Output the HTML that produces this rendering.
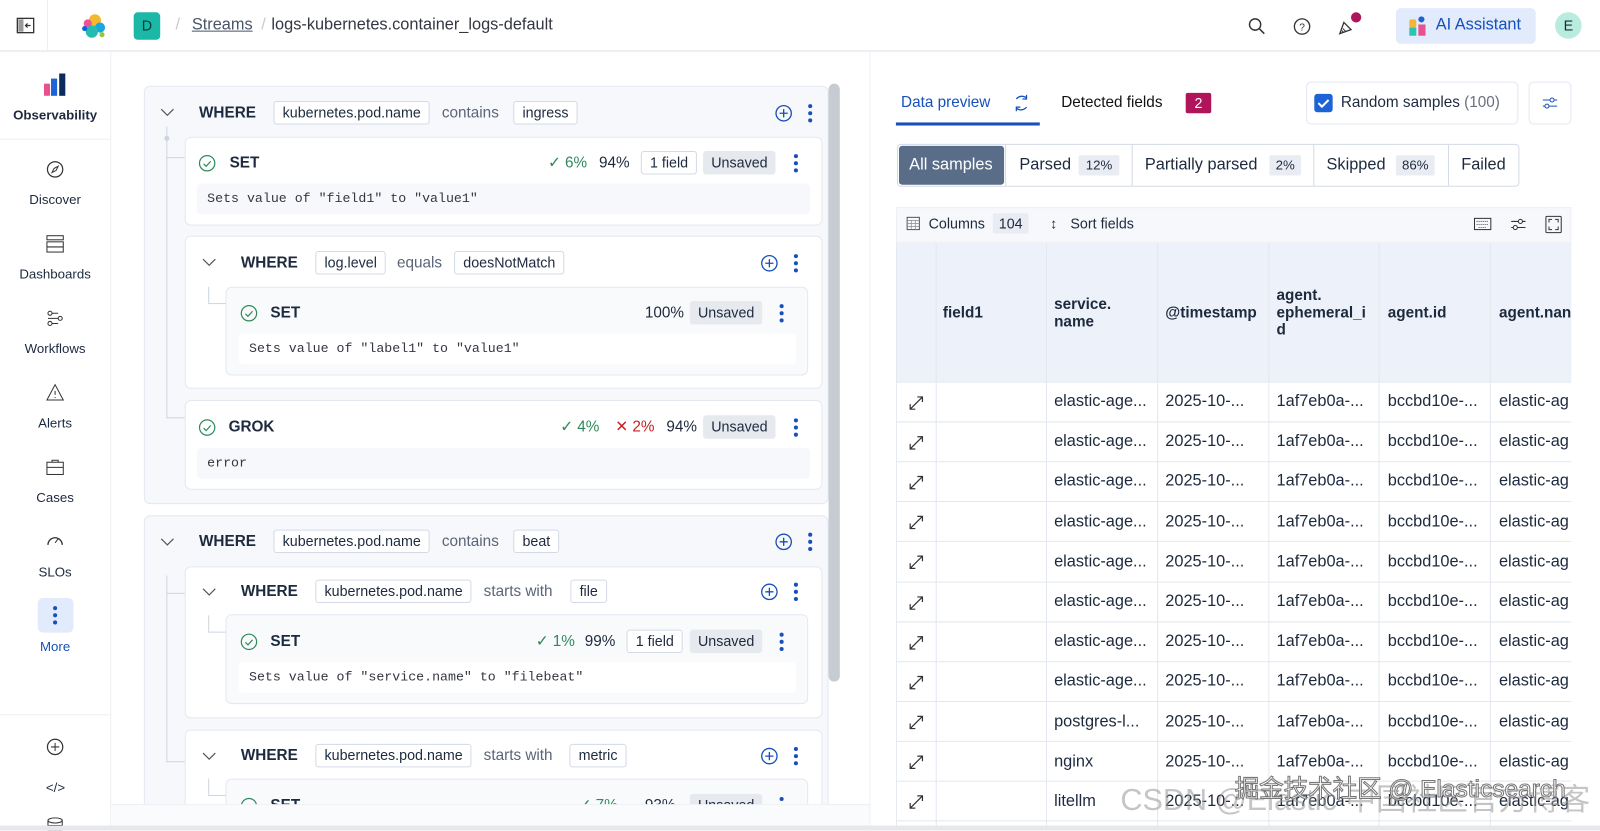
<!DOCTYPE html>
<html><head><meta charset="utf-8"><style>
*{box-sizing:border-box;margin:0;padding:0}
html,body{width:1600px;height:831px;overflow:hidden;background:#fff}
body{font-family:"Liberation Sans",sans-serif;color:#1d2a3e;position:relative}
#clip{position:absolute;left:0;top:0;width:1600px;height:831px;overflow:hidden}
#root{position:absolute;left:0;top:0;width:1568px;height:814px;transform:scale(1.020408);transform-origin:0 0;overflow:hidden}
.a{position:absolute}
.t{position:absolute;white-space:nowrap;line-height:1}
.b{font-weight:bold}
.tag{position:absolute;height:23px;border:1px solid #d3dae6;background:#fff;border-radius:3px;font-size:14px;line-height:21px;padding:0 8px;white-space:nowrap}
.uns{position:absolute;height:23px;background:#e6e9ee;border-radius:3px;font-size:14px;line-height:23px;padding:0 8px;white-space:nowrap}
.card{position:absolute;background:#fff;border:1px solid #e3e8f2;border-radius:6px}
.desc{position:absolute;background:#f7f8fb;border-radius:4px;font-family:"Liberation Mono",monospace;font-size:13px;color:#343741;line-height:30px;padding-left:10px;white-space:pre}
.dots{position:absolute;width:4px;height:18px}
.dots i{display:block;width:4px;height:4px;border-radius:50%;background:#1750ba;margin-bottom:3px}
.nav{position:absolute;left:0;width:108px;text-align:center;font-size:13px;color:#1d2a3e}
.g{color:#2f8a5a}
.r{color:#c61e25}
.cell{position:absolute;font-size:15px;white-space:nowrap;line-height:1}
</style></head><body><div id="clip"><div id="root">
<!-- top header -->
<div class="a" style="left:0;top:0;width:1600px;height:51px;border-bottom:2px solid #eceff3;background:#fff"></div>
<div class="a" style="left:46px;top:0;width:1px;height:51px;background:#eceff3"></div>
<svg class="a" style="left:16px;top:16px" width="18" height="18" viewBox="0 0 18 18"><rect x="1" y="2" width="16" height="14" fill="none" stroke="#333" stroke-width="1.3"/><rect x="2" y="3" width="5" height="12" fill="#999"/><path d="M14 9H9M11 7l-2 2 2 2" stroke="#333" fill="none" stroke-width="1.2"/></svg>
<svg class="a" style="left:78px;top:12px" width="28" height="28" viewBox="0 0 28 28"><circle cx="15" cy="8" r="6" fill="#f2b92f"/><circle cx="8" cy="11" r="4" fill="#ef5098"/><circle cx="20" cy="15" r="5" fill="#17a8e0"/><circle cx="12" cy="19" r="6" fill="#24bbb1"/><circle cx="22" cy="22" r="2.5" fill="#93c83e"/><circle cx="5" cy="16" r="2.5" fill="#0b64dd"/></svg>
<div class="a" style="left:131px;top:12px;width:26px;height:27px;background:#1bb8a8;border-radius:4px;color:#083a36;font-size:14px;text-align:center;line-height:27px">D</div>
<div class="t" style="left:172px;top:17px;font-size:16px;color:#c5cbd4">/</div>
<div class="t" style="left:188px;top:17px;font-size:16px;color:#4a5568;text-decoration:underline">Streams</div>
<div class="t" style="left:256px;top:17px;font-size:16px;color:#c5cbd4">/</div>
<div class="t" style="left:266px;top:17px;font-size:16px;color:#343741">logs-kubernetes.container_logs-default</div>
<svg class="a" style="left:1223px;top:17px" width="18" height="18" viewBox="0 0 18 18"><circle cx="7" cy="7" r="5.5" fill="none" stroke="#333" stroke-width="1.4"/><path d="M11 11l5 5" stroke="#333" stroke-width="1.5"/></svg>
<svg class="a" style="left:1267px;top:17px" width="18" height="18" viewBox="0 0 18 18"><circle cx="9" cy="9" r="7.5" fill="none" stroke="#333" stroke-width="1.3"/><text x="9" y="13" font-size="10" text-anchor="middle" font-family="Liberation Sans" fill="#333">?</text></svg>
<svg class="a" style="left:1310px;top:16px" width="20" height="20" viewBox="0 0 20 20"><path d="M3 17l4-11 7 7z" fill="none" stroke="#333" stroke-width="1.3"/><path d="M6 12l3 3M5 14l2 2" stroke="#333"/></svg>
<div class="a" style="left:1324px;top:12px;width:10px;height:10px;border-radius:50%;background:#b0145a"></div>
<div class="a" style="left:1368px;top:8px;width:137px;height:35px;background:#e1ebfc;border-radius:5px"></div>
<svg class="a" style="left:1381px;top:16px" width="18" height="20" viewBox="0 0 18 20"><rect x="0" y="3" width="7" height="8" fill="#f3b63c" rx="2"/><rect x="0" y="11" width="7" height="8" fill="#2ac4b0"/><circle cx="12" cy="3" r="3" fill="#1d62d6"/><rect x="9" y="8" width="7" height="11" fill="#e8508f"/></svg>
<div class="t" style="left:1407px;top:17px;font-size:16px;color:#1750ba">AI Assistant</div>
<div class="a" style="left:1524px;top:12px;width:26px;height:26px;border-radius:50%;background:#b8ecde;font-size:14px;text-align:center;line-height:26px">E</div>

<!-- left nav -->
<div class="a" style="left:108px;top:51px;width:1px;height:780px;background:#eceff3"></div>
<div class="a" style="left:0;top:136px;width:108px;height:1px;background:#eceff3"></div>
<div class="a" style="left:0;top:700px;width:108px;height:1px;background:#eceff3"></div>
<svg class="a" style="left:43px;top:72px" width="22" height="22" viewBox="0 0 22 22"><rect x="0" y="10" width="6" height="12" fill="#e8508f" rx="1"/><rect x="7" y="5" width="6" height="17" fill="#1d62d6"/><rect x="15" y="0" width="6" height="22" fill="#0b2b5a"/></svg>
<div class="nav" style="top:105px;font-weight:bold">Observability</div>
<svg class="a" style="left:45px;top:157px" width="18" height="18" viewBox="0 0 18 18"><circle cx="9" cy="9" r="7.5" fill="none" stroke="#333" stroke-width="1.2"/><path d="M12 6l-2 4-4 2 2-4z" fill="none" stroke="#333"/></svg>
<div class="nav" style="top:188px">Discover</div>
<svg class="a" style="left:45px;top:230px" width="18" height="18" viewBox="0 0 18 18"><rect x="1" y="1" width="16" height="4" fill="none" stroke="#333"/><rect x="1" y="7" width="16" height="10" fill="none" stroke="#333"/><path d="M1 12h16" stroke="#333"/></svg>
<div class="nav" style="top:261px">Dashboards</div>
<svg class="a" style="left:45px;top:303px" width="18" height="18" viewBox="0 0 18 18"><circle cx="4" cy="4" r="2" fill="none" stroke="#333"/><circle cx="14" cy="9" r="2" fill="none" stroke="#333"/><circle cx="4" cy="14" r="2" fill="none" stroke="#333"/><path d="M6 4h6M6 14h6M2 9h10" stroke="#333"/></svg>
<div class="nav" style="top:334px">Workflows</div>
<svg class="a" style="left:45px;top:376px" width="18" height="18" viewBox="0 0 18 18"><path d="M9 1L17 16H1z" fill="none" stroke="#333"/><path d="M9 7v4M9 13v1" stroke="#333"/></svg>
<div class="nav" style="top:407px">Alerts</div>
<svg class="a" style="left:45px;top:449px" width="18" height="18" viewBox="0 0 18 18"><rect x="1" y="4" width="16" height="12" fill="none" stroke="#333"/><path d="M6 4V2h6v2M1 9h16" stroke="#333" fill="none"/></svg>
<div class="nav" style="top:480px">Cases</div>
<svg class="a" style="left:45px;top:522px" width="18" height="14" viewBox="0 0 18 14"><path d="M2 12A7 7 0 1 1 16 12" fill="none" stroke="#333" stroke-width="1.3"/><path d="M9 10l3-4" stroke="#333"/></svg>
<div class="nav" style="top:553px">SLOs</div>
<div class="a" style="left:37px;top:586px;width:35px;height:34px;background:#e1ebfc;border-radius:5px"></div>
<div class="dots" style="left:52px;top:594px"><i></i><i></i><i></i></div>
<div class="nav" style="top:626px;color:#1750ba">More</div>
<svg class="a" style="left:45px;top:723px" width="18" height="18" viewBox="0 0 18 18"><circle cx="9" cy="9" r="7.5" fill="none" stroke="#333" stroke-width="1.2"/><path d="M9 5v8M5 9h8" stroke="#333"/></svg>
<div class="t" style="left:45px;top:765px;font-size:13px">&lt;/&gt;</div>
<svg class="a" style="left:46px;top:801px" width="16" height="14" viewBox="0 0 16 14"><ellipse cx="8" cy="3" rx="7" ry="2.5" fill="none" stroke="#333"/><path d="M1 3v10h14V3M1 8h14" fill="none" stroke="#333"/></svg>

<!-- main left panel -->
<div class="a" style="left:109px;top:788px;width:743px;height:30px;background:#fafbfc;border-top:1px solid #eceff3"></div>
<div class="a" style="left:109px;top:51px;width:743px;height:737px;overflow:hidden">
 <div style="position:absolute;left:-109px;top:-51px;width:900px;height:900px">
 <!-- group1 -->
 <div class="card" style="left:141px;top:84px;width:671px;height:410px;background:#f7f8fc"></div>
 <svg class="a" style="left:156px;top:104px" width="16" height="12"><path d="M2 3l6 6 6-6" fill="none" stroke="#555" stroke-width="1.2"/></svg>
 <div class="t b" style="left:195px;top:103px;font-size:15px">WHERE</div>
 <div class="tag" style="left:268px;top:99px">kubernetes.pod.name</div>
 <div class="t" style="left:433px;top:103px;font-size:15px;color:#5a6578">contains</div>
 <div class="tag" style="left:503px;top:99px">ingress</div>
 <svg class="a" style="left:759px;top:102px" width="18" height="18"><circle cx="9" cy="9" r="7.5" fill="none" stroke="#1750ba" stroke-width="1.3"/><path d="M9 5v8M5 9h8" stroke="#1750ba" stroke-width="1.3"/></svg>
 <div class="dots" style="left:792px;top:102px"><i></i><i></i><i></i></div>
 <div class="a" style="left:163px;top:124px;width:1px;height:286px;background:#cfd5df"></div>
 <div class="a" style="left:161px;top:133px;width:5px;height:5px;border-radius:50%;background:#cfd5df"></div>
 <div class="a" style="left:163px;top:154px;width:18px;height:1px;background:#cfd5df"></div>
 <div class="a" style="left:163px;top:409px;width:18px;height:1px;background:#cfd5df"></div>

 <div class="card" style="left:181px;top:134px;width:625px;height:87px"></div>
 <svg class="a" style="left:194px;top:151px" width="18" height="18"><circle cx="9" cy="9" r="7.5" fill="none" stroke="#2f8a5a" stroke-width="1.2"/><path d="M5.5 9.5l2.5 2.5 4.5-5" fill="none" stroke="#2f8a5a" stroke-width="1.2"/></svg>
 <div class="t b" style="left:225px;top:152px;font-size:15px">SET</div>
 <div class="t g" style="left:537px;top:152px;font-size:15px">✓ 6%</div>
 <div class="t" style="left:587px;top:152px;font-size:15px">94%</div>
 <div class="tag" style="left:628px;top:148px">1 field</div>
 <div class="uns" style="left:689px;top:148px">Unsaved</div>
 <div class="dots" style="left:778px;top:151px"><i></i><i></i><i></i></div>
 <div class="desc" style="left:193px;top:180px;width:601px">Sets value of "field1" to "value1"</div>

 <div class="card" style="left:181px;top:231px;width:625px;height:150px"></div>
 <svg class="a" style="left:197px;top:251px" width="16" height="12"><path d="M2 3l6 6 6-6" fill="none" stroke="#555" stroke-width="1.2"/></svg>
 <div class="t b" style="left:236px;top:250px;font-size:15px">WHERE</div>
 <div class="tag" style="left:309px;top:246px">log.level</div>
 <div class="t" style="left:389px;top:250px;font-size:15px;color:#5a6578">equals</div>
 <div class="tag" style="left:445px;top:246px">doesNotMatch</div>
 <svg class="a" style="left:745px;top:249px" width="18" height="18"><circle cx="9" cy="9" r="7.5" fill="none" stroke="#1750ba" stroke-width="1.3"/><path d="M9 5v8M5 9h8" stroke="#1750ba" stroke-width="1.3"/></svg>
 <div class="dots" style="left:778px;top:249px"><i></i><i></i><i></i></div>
 <div class="a" style="left:204px;top:281px;width:1px;height:16px;background:#cfd5df"></div>
 <div class="a" style="left:204px;top:297px;width:17px;height:1px;background:#cfd5df"></div>
 <div class="card" style="left:221px;top:281px;width:571px;height:87px;background:#f9fafc"></div>
 <svg class="a" style="left:235px;top:298px" width="18" height="18"><circle cx="9" cy="9" r="7.5" fill="none" stroke="#2f8a5a" stroke-width="1.2"/><path d="M5.5 9.5l2.5 2.5 4.5-5" fill="none" stroke="#2f8a5a" stroke-width="1.2"/></svg>
 <div class="t b" style="left:265px;top:299px;font-size:15px">SET</div>
 <div class="t" style="left:632px;top:299px;font-size:15px">100%</div>
 <div class="uns" style="left:676px;top:295px">Unsaved</div>
 <div class="dots" style="left:764px;top:298px"><i></i><i></i><i></i></div>
 <div class="desc" style="left:234px;top:327px;width:546px;background:#fff">Sets value of "label1" to "value1"</div>

 <div class="card" style="left:181px;top:392px;width:625px;height:88px"></div>
 <svg class="a" style="left:194px;top:410px" width="18" height="18"><circle cx="9" cy="9" r="7.5" fill="none" stroke="#2f8a5a" stroke-width="1.2"/><path d="M5.5 9.5l2.5 2.5 4.5-5" fill="none" stroke="#2f8a5a" stroke-width="1.2"/></svg>
 <div class="t b" style="left:224px;top:411px;font-size:15px">GROK</div>
 <div class="t g" style="left:549px;top:411px;font-size:15px">✓ 4%</div>
 <div class="t r" style="left:603px;top:411px;font-size:15px">✕ 2%</div>
 <div class="t" style="left:653px;top:411px;font-size:15px">94%</div>
 <div class="uns" style="left:689px;top:407px">Unsaved</div>
 <div class="dots" style="left:778px;top:410px"><i></i><i></i><i></i></div>
 <div class="desc" style="left:193px;top:439px;width:601px">error</div>

 <!-- group2 -->
 <div class="card" style="left:141px;top:505px;width:671px;height:400px;background:#f7f8fc"></div>
 <svg class="a" style="left:156px;top:525px" width="16" height="12"><path d="M2 3l6 6 6-6" fill="none" stroke="#555" stroke-width="1.2"/></svg>
 <div class="t b" style="left:195px;top:523px;font-size:15px">WHERE</div>
 <div class="tag" style="left:268px;top:519px">kubernetes.pod.name</div>
 <div class="t" style="left:433px;top:523px;font-size:15px;color:#5a6578">contains</div>
 <div class="tag" style="left:503px;top:519px">beat</div>
 <svg class="a" style="left:759px;top:522px" width="18" height="18"><circle cx="9" cy="9" r="7.5" fill="none" stroke="#1750ba" stroke-width="1.3"/><path d="M9 5v8M5 9h8" stroke="#1750ba" stroke-width="1.3"/></svg>
 <div class="dots" style="left:792px;top:522px"><i></i><i></i><i></i></div>
 <div class="a" style="left:163px;top:564px;width:1px;height:183px;background:#cfd5df"></div>
 <div class="a" style="left:163px;top:581px;width:18px;height:1px;background:#cfd5df"></div>
 <div class="a" style="left:163px;top:746px;width:18px;height:1px;background:#cfd5df"></div>

 <div class="card" style="left:181px;top:555px;width:625px;height:149px"></div>
 <svg class="a" style="left:197px;top:574px" width="16" height="12"><path d="M2 3l6 6 6-6" fill="none" stroke="#555" stroke-width="1.2"/></svg>
 <div class="t b" style="left:236px;top:572px;font-size:15px">WHERE</div>
 <div class="tag" style="left:309px;top:568px">kubernetes.pod.name</div>
 <div class="t" style="left:474px;top:572px;font-size:15px;color:#5a6578">starts with</div>
 <div class="tag" style="left:559px;top:568px">file</div>
 <svg class="a" style="left:745px;top:571px" width="18" height="18"><circle cx="9" cy="9" r="7.5" fill="none" stroke="#1750ba" stroke-width="1.3"/><path d="M9 5v8M5 9h8" stroke="#1750ba" stroke-width="1.3"/></svg>
 <div class="dots" style="left:778px;top:571px"><i></i><i></i><i></i></div>
 <div class="a" style="left:204px;top:603px;width:1px;height:16px;background:#cfd5df"></div>
 <div class="a" style="left:204px;top:619px;width:17px;height:1px;background:#cfd5df"></div>
 <div class="card" style="left:221px;top:602px;width:571px;height:88px;background:#f9fafc"></div>
 <svg class="a" style="left:235px;top:620px" width="18" height="18"><circle cx="9" cy="9" r="7.5" fill="none" stroke="#2f8a5a" stroke-width="1.2"/><path d="M5.5 9.5l2.5 2.5 4.5-5" fill="none" stroke="#2f8a5a" stroke-width="1.2"/></svg>
 <div class="t b" style="left:265px;top:621px;font-size:15px">SET</div>
 <div class="t g" style="left:525px;top:621px;font-size:15px">✓ 1%</div>
 <div class="t" style="left:573px;top:621px;font-size:15px">99%</div>
 <div class="tag" style="left:614px;top:617px">1 field</div>
 <div class="uns" style="left:676px;top:617px">Unsaved</div>
 <div class="dots" style="left:764px;top:620px"><i></i><i></i><i></i></div>
 <div class="desc" style="left:234px;top:649px;width:546px;background:#fff">Sets value of "service.name" to "filebeat"</div>

 <div class="card" style="left:181px;top:715px;width:625px;height:149px"></div>
 <svg class="a" style="left:197px;top:735px" width="16" height="12"><path d="M2 3l6 6 6-6" fill="none" stroke="#555" stroke-width="1.2"/></svg>
 <div class="t b" style="left:236px;top:733px;font-size:15px">WHERE</div>
 <div class="tag" style="left:309px;top:729px">kubernetes.pod.name</div>
 <div class="t" style="left:474px;top:733px;font-size:15px;color:#5a6578">starts with</div>
 <div class="tag" style="left:558px;top:729px">metric</div>
 <svg class="a" style="left:745px;top:732px" width="18" height="18"><circle cx="9" cy="9" r="7.5" fill="none" stroke="#1750ba" stroke-width="1.3"/><path d="M9 5v8M5 9h8" stroke="#1750ba" stroke-width="1.3"/></svg>
 <div class="dots" style="left:778px;top:732px"><i></i><i></i><i></i></div>
 <div class="a" style="left:204px;top:763px;width:1px;height:16px;background:#cfd5df"></div>
 <div class="a" style="left:204px;top:779px;width:17px;height:1px;background:#cfd5df"></div>
 <div class="card" style="left:221px;top:763px;width:571px;height:88px;background:#f9fafc"></div>
 <svg class="a" style="left:235px;top:781px" width="18" height="18"><circle cx="9" cy="9" r="7.5" fill="none" stroke="#2f8a5a" stroke-width="1.2"/></svg>
 <div class="t b" style="left:265px;top:782px;font-size:15px">SET</div>
 <div class="t g" style="left:567px;top:782px;font-size:15px">✓ 7%</div>
 <div class="t" style="left:632px;top:782px;font-size:15px">93%</div>
 <div class="uns" style="left:676px;top:778px">Unsaved</div>
 <div class="dots" style="left:764px;top:781px"><i></i><i></i><i></i></div>
 </div>
</div>
<div class="a" style="left:812px;top:82px;width:11px;height:586px;background:#c7cbd2;border-radius:6px"></div>

<!-- right panel -->
<div class="a" style="left:852px;top:51px;width:1px;height:780px;background:#eceff3"></div>
<div class="t" style="left:883px;top:93px;font-size:15px;color:#1750ba">Data preview</div>
<svg class="a" style="left:992px;top:92px" width="18" height="18"><path d="M4 5A7 7 0 0 1 14 4M14 13A7 7 0 0 1 4 14" fill="none" stroke="#1750ba" stroke-width="1.3"/><path d="M14 1v4h-4M4 17v-4h4" fill="none" stroke="#1750ba" stroke-width="1.2"/></svg>
<div class="a" style="left:878px;top:120px;width:141px;height:3px;background:#1750ba"></div>
<div class="t" style="left:1040px;top:93px;font-size:15px;color:#111">Detected fields</div>
<div class="a" style="left:1162px;top:91px;width:25px;height:20px;background:#b0145a;color:#fff;font-size:14px;text-align:center;line-height:20px;border-radius:2px">2</div>
<div class="a" style="left:1280px;top:80px;width:208px;height:42px;border:1px solid #e3e8f2;border-radius:5px"></div>
<div class="a" style="left:1288px;top:92px;width:18px;height:18px;background:#1d62d6;border-radius:3px"></div>
<svg class="a" style="left:1288px;top:92px" width="18" height="18"><path d="M4 9l3.5 3.5L14 6" fill="none" stroke="#fff" stroke-width="2"/></svg>
<div class="t" style="left:1314px;top:93px;font-size:15px">Random samples <span style="color:#69707d">(100)</span></div>
<div class="a" style="left:1498px;top:80px;width:42px;height:42px;border:1px solid #e3e8f2;border-radius:5px"></div>
<svg class="a" style="left:1511px;top:93px" width="16" height="16"><path d="M1 5h14M1 11h14" stroke="#1750ba"/><circle cx="10" cy="5" r="2" fill="#fff" stroke="#1750ba"/><circle cx="5" cy="11" r="2" fill="#fff" stroke="#1750ba"/></svg>

<div class="a" style="left:879px;top:141px;width:610px;height:42px;border:1px solid #d3dae6;border-radius:4px"></div>
<div class="a" style="left:881px;top:143px;width:103px;height:38px;background:#5a6d88;border-radius:3px"></div>
<div class="t" style="left:891px;top:154px;font-size:16px;color:#fff">All samples</div>
<div class="a" style="left:985px;top:142px;width:1px;height:40px;background:#d3dae6"></div>
<div class="t" style="left:999px;top:154px;font-size:16px">Parsed</div>
<div class="a" style="left:1057px;top:152px;width:40px;height:20px;background:#e9edf3;font-size:13px;text-align:center;line-height:20px;border-radius:2px">12%</div>
<div class="a" style="left:1109px;top:142px;width:1px;height:40px;background:#d3dae6"></div>
<div class="t" style="left:1122px;top:154px;font-size:16px">Partially parsed</div>
<div class="a" style="left:1244px;top:152px;width:31px;height:20px;background:#e9edf3;font-size:13px;text-align:center;line-height:20px;border-radius:2px">2%</div>
<div class="a" style="left:1287px;top:142px;width:1px;height:40px;background:#d3dae6"></div>
<div class="t" style="left:1300px;top:154px;font-size:16px">Skipped</div>
<div class="a" style="left:1368px;top:152px;width:38px;height:20px;background:#e9edf3;font-size:13px;text-align:center;line-height:20px;border-radius:2px">86%</div>
<div class="a" style="left:1419px;top:142px;width:1px;height:40px;background:#d3dae6"></div>
<div class="t" style="left:1432px;top:154px;font-size:16px">Failed</div>

<!-- table -->
<div class="a" style="left:878px;top:203px;width:662px;height:35px;background:#f7f8fb;border:1px solid #eceff3"></div>
<svg class="a" style="left:888px;top:212px" width="14" height="14"><rect x="1" y="1" width="12" height="12" fill="none" stroke="#555"/><path d="M1 4h12M1 7h12M1 10h12M5 4v9M9 4v9" stroke="#888" stroke-width=".7"/></svg>
<div class="t" style="left:910px;top:212px;font-size:14px">Columns</div>
<div class="a" style="left:973px;top:209px;width:35px;height:20px;background:#e9edf3;font-size:14px;text-align:center;line-height:20px;border-radius:2px">104</div>
<div class="t" style="left:1029px;top:212px;font-size:14px">↕</div>
<div class="t" style="left:1049px;top:212px;font-size:14px">Sort fields</div>
<svg class="a" style="left:1444px;top:213px" width="18" height="13"><rect x="1" y="1" width="16" height="11" fill="none" stroke="#333"/><path d="M3 4h12M3 7h12M5 10h8" stroke="#555" stroke-dasharray="1 1"/></svg>
<svg class="a" style="left:1480px;top:212px" width="16" height="16"><path d="M1 5h14M1 11h14" stroke="#333"/><circle cx="10" cy="5" r="2" fill="#fff" stroke="#333"/><circle cx="5" cy="11" r="2" fill="#fff" stroke="#333"/></svg>
<svg class="a" style="left:1514px;top:211px" width="17" height="18"><rect x="1" y="1" width="15" height="16" fill="none" stroke="#333" rx="1"/><path d="M4 7V4h3M13 7V4h-3M4 11v3h3M13 11v3h-3" stroke="#333" fill="none"/></svg>
<div class="a" style="left:878px;top:238px;width:662px;height:136px;background:#edf2fa"></div>
<div class="cell b" style="left:924px;top:299px">field1</div>
<div class="cell b" style="left:1033px;top:290px;line-height:17px">service.<br>name</div>
<div class="cell b" style="left:1142px;top:299px">@timestamp</div>
<div class="cell b" style="left:1251px;top:281px;line-height:17px">agent.<br>ephemeral_i<br>d</div>
<div class="cell b" style="left:1360px;top:299px">agent.id</div>
<div class="cell b" style="left:1469px;top:299px">agent.nan</div>
<div class="a" style="left:878px;top:238px;width:662px;height:593px;overflow:hidden">
<svg width="662" height="593" style="position:absolute;left:0;top:0">
<g stroke="#e3e8ef" stroke-width="1">
<path d="M0.5 0V593M39.5 0V593M147.5 0V593M256.5 0V593M365.5 0V593M473.5 0V593M582.5 0V593"/>
<path d="M0 136.5H662M0 175.5H662M0 214.5H662M0 253.5H662M0 292.5H662M0 332.5H662M0 371.5H662M0 410.5H662M0 449.5H662M0 488.5H662M0 527.5H662M0 566.5H662"/>
</g>
<g stroke="#333" stroke-width="1.2" fill="none">
<path d="M14 163l12-12M21 151h5v5M14 158v5h5"/><path d="M14 202l12-12M21 190h5v5M14 197v5h5"/><path d="M14 241l12-12M21 229h5v5M14 236v5h5"/><path d="M14 280l12-12M21 268h5v5M14 275v5h5"/><path d="M14 319l12-12M21 307h5v5M14 314v5h5"/><path d="M14 359l12-12M21 347h5v5M14 354v5h5"/><path d="M14 398l12-12M21 386h5v5M14 393v5h5"/><path d="M14 437l12-12M21 425h5v5M14 432v5h5"/><path d="M14 476l12-12M21 464h5v5M14 471v5h5"/><path d="M14 515l12-12M21 503h5v5M14 510v5h5"/><path d="M14 554l12-12M21 542h5v5M14 549v5h5"/>
</g>
</svg>
</div>
<div class="a" style="left:1033px;top:374px;font-size:16px;line-height:39.2px;white-space:nowrap">
elastic-age...<br>elastic-age...<br>elastic-age...<br>elastic-age...<br>elastic-age...<br>elastic-age...<br>elastic-age...<br>elastic-age...<br>postgres-l...<br>nginx<br>litellm</div>
<div class="a" style="left:1142px;top:374px;font-size:16px;line-height:39.2px;white-space:nowrap">2025-10-...<br>2025-10-...<br>2025-10-...<br>2025-10-...<br>2025-10-...<br>2025-10-...<br>2025-10-...<br>2025-10-...<br>2025-10-...<br>2025-10-...<br>2025-10-...</div>
<div class="a" style="left:1251px;top:374px;font-size:16px;line-height:39.2px;white-space:nowrap">1af7eb0a-...<br>1af7eb0a-...<br>1af7eb0a-...<br>1af7eb0a-...<br>1af7eb0a-...<br>1af7eb0a-...<br>1af7eb0a-...<br>1af7eb0a-...<br>1af7eb0a-...<br>1af7eb0a-...<br>1af7eb0a-...</div>
<div class="a" style="left:1360px;top:374px;font-size:16px;line-height:39.2px;white-space:nowrap">bccbd10e-...<br>bccbd10e-...<br>bccbd10e-...<br>bccbd10e-...<br>bccbd10e-...<br>bccbd10e-...<br>bccbd10e-...<br>bccbd10e-...<br>bccbd10e-...<br>bccbd10e-...<br>bccbd10e-...</div>
<div class="a" style="left:1469px;top:374px;width:71px;overflow:hidden;font-size:16px;line-height:39.2px;white-space:nowrap">elastic-ag<br>elastic-ag<br>elastic-ag<br>elastic-ag<br>elastic-ag<br>elastic-ag<br>elastic-ag<br>elastic-ag<br>elastic-ag<br>elastic-ag<br>elastic-ag</div>
<div class="t" style="left:1098px;top:770px;font-size:30px;color:rgba(150,150,150,.55);font-family:'Liberation Sans','Noto Sans CJK SC',sans-serif">CSDN @Elastic 中国社区官方博客</div>
<div class="t" style="left:1210px;top:762px;font-size:24px;color:rgba(255,255,255,.85);-webkit-text-stroke:1px #777;font-family:'Liberation Sans','Noto Sans CJK SC',sans-serif">掘金技术社区 @ Elasticsearch</div>
<div class="a" style="left:0;top:809px;width:1600px;height:5px;background:#e6e8eb"></div>
</div></div>
</body></html>
